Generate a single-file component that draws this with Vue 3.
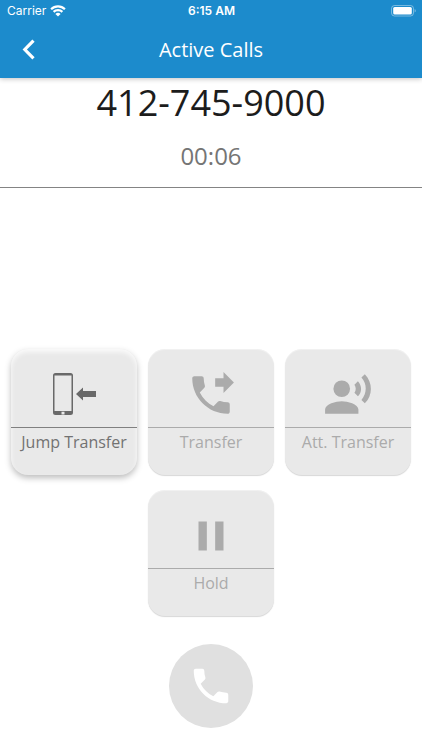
<script setup>
import { ref } from 'vue'

const phonePath =
  'M20 15.5c-1.25 0-2.45-.2-3.57-.57-.35-.11-.74-.03-1.02.24l-2.2 2.2c-2.83-1.44-5.15-3.75-6.59-6.59l2.2-2.21c.28-.26.36-.65.25-1C8.7 6.45 8.5 5.25 8.5 4c0-.55-.45-1-1-1H4c-.55 0-1 .45-1 1 0 9.39 7.61 17 17 17 .55 0 1-.45 1-1v-3.5c0-.55-.45-1-1-1z'

const number = ref('412-745-9000')
const duration = ref('00:06')

const actions = [
  { id: 'jump', label: 'Jump Transfer', enabled: true },
  { id: 'transfer', label: 'Transfer', enabled: false },
  { id: 'attended', label: 'Att. Transfer', enabled: false },
  { id: 'hold', label: 'Hold', enabled: false }
]
</script>

<template>
  <div class="screen">
    <header class="top">
      <div class="status">
        <div class="carrier">
          <span>Carrier</span>
          <svg class="wifi" viewBox="0 0 16 12" aria-hidden="true">
            <path d="M1.1 4.2a9.8 9.8 0 0 1 13.8 0" />
            <path d="M3.6 6.9a6.3 6.3 0 0 1 8.8 0" />
            <path class="dot" d="M8 11.6 5.4 9a3.7 3.7 0 0 1 5.2 0z" />
          </svg>
        </div>
        <span class="clock">6:15 AM</span>
        <svg class="battery" viewBox="0 0 26 12" aria-hidden="true">
          <rect class="shell" x="1.5" y=".5" width="22" height="10.5" rx="3" />
          <rect x="3.2" y="2" width="18.6" height="7.5" rx="1.5" />
          <path class="tip" d="M24.7 4c1.3.6 1.3 3 0 3.6z" />
        </svg>
      </div>
      <nav class="bar">
        <button class="back" type="button" aria-label="Back">
          <svg viewBox="0 0 14 22" aria-hidden="true"><path d="M11.5 1.6 2.8 10.5l8.7 8.9" /></svg>
        </button>
        <h1 class="title">Active Calls</h1>
      </nav>
    </header>

    <section class="call">
      <p class="number">{{ number }}</p>
      <p class="duration">{{ duration }}</p>
    </section>

    <main class="pad">
      <div class="grid">
        <button
          v-for="a in actions"
          :key="a.id"
          type="button"
          class="card"
          :class="[a.id, { raised: a.enabled }]"
          :disabled="!a.enabled"
        >
          <span class="picture">
            <svg v-if="a.id === 'jump'" viewBox="0 0 50 50" aria-hidden="true">
              <path
                fill-rule="evenodd"
                d="M6.5 3h15A2.5 2.5 0 0 1 24 5.5v37a2.5 2.5 0 0 1-2.5 2.5h-15A2.5 2.5 0 0 1 4 42.500v-37A2.5 2.5 0 0 1 6.500 3zM5.5 5.6v35.400h17V5.6zM12.500 41.8v2.600h3v-2.600z"
              />
              <path d="M27 24l7-6.5V21h13v6H34v3.500z" />
            </svg>
            <svg v-else-if="a.id === 'transfer'" viewBox="0 0 24 24" aria-hidden="true">
              <path d="M18 11l5-5-5-5v3h-4v4h4z" />
              <path :d="phonePath" />
            </svg>
            <svg v-else-if="a.id === 'attended'" viewBox="0 0 24 24" aria-hidden="true">
              <circle cx="9" cy="9" r="4" />
              <path
                d="M9 15c-2.67 0-8 1.34-8 4v2h16v-2c0-2.66-5.33-4-8-4zm7.76-9.64l-1.68 1.69c.84 1.18.84 2.71 0 3.89l1.68 1.69c2.02-2.02 2.02-5.07 0-7.27zM20.07 2l-1.63 1.63c2.77 3.02 2.77 7.56 0 10.74L20.07 16c3.9-3.89 3.91-9.95 0-14z"
              />
            </svg>
            <svg v-else viewBox="0 0 24 24" aria-hidden="true">
              <path d="M6 19h4V5H6v14zm8-14v14h4V5h-4z" />
            </svg>
          </span>
          <span class="label">{{ a.label }}</span>
        </button>
      </div>
      <button class="dial" type="button" aria-label="Call" disabled>
        <svg viewBox="0 0 24 24" aria-hidden="true"><path :d="phonePath" /></svg>
      </button>
    </main>
  </div>
</template>

<style>
body {
  margin: 0;
  background: #fff;
}
</style>

<style scoped>
.screen {
  display: flex;
  flex-direction: column;
  min-height: 100vh;
  background: #fff;
  font-family: 'Open Sans', 'Noto Sans', sans-serif;
}
button {
  margin: 0;
  padding: 0;
  border: 0;
  font: inherit;
}
svg {
  display: block;
  fill: currentColor;
}
.top {
  background: #1c8bcc;
  color: #fff;
  box-shadow: 0 1px 5px rgba(0, 0, 0, 0.24);
}
.status {
  display: grid;
  grid-template-columns: 1fr auto 1fr;
  align-items: center;
  height: 22px;
  padding: 0 6px 0 7px;
  font-family: Inter, Roboto, sans-serif;
  font-size: 12px;
  line-height: 22px;
}
.carrier {
  display: flex;
  align-items: center;
  gap: 4px;
}
.wifi {
  width: 16px;
  height: 12px;
}
.wifi path {
  fill: none;
  stroke: currentColor;
  stroke-width: 2.2;
}
.wifi .dot {
  fill: currentColor;
  stroke: none;
}
.clock {
  font-weight: 600;
}
.battery {
  justify-self: end;
  width: 26px;
  height: 12px;
}
.battery .shell {
  fill: none;
  stroke: #fff;
  stroke-opacity: 0.4;
}
.battery .tip {
  opacity: 0.5;
}
.bar {
  display: grid;
  grid-template-columns: 58px 1fr 58px;
  align-items: center;
  height: 56px;
}
.back {
  display: flex;
  align-items: center;
  justify-content: center;
  height: 56px;
  background: none;
  color: #fff;
  cursor: pointer;
}
.back svg {
  width: 14px;
  height: 22px;
}
.back path {
  fill: none;
  stroke: currentColor;
  stroke-width: 3.2;
}
.title {
  margin: 0;
  font-size: 20px;
  font-weight: 400;
  line-height: 28px;
  text-align: center;
}
.call {
  padding-bottom: 13px;
  border-bottom: 1px solid #848484;
  text-align: center;
}
.number,
.duration {
  margin: 0;
}
.number {
  color: #1c1c1c;
  font-size: 36px;
  line-height: 50px;
}
.duration {
  padding-top: 10px;
  color: #757575;
  font-size: 24px;
  line-height: 36px;
}
.pad {
  display: flex;
  flex-direction: column;
  align-items: center;
  gap: 28px;
  margin-top: auto;
  padding: 12px 11px 22px;
}
.grid {
  display: grid;
  grid-template-columns: repeat(3, 1fr);
  gap: 15px 11px;
  width: 100%;
}
.card {
  display: flex;
  flex-direction: column;
  aspect-ratio: 1;
  border-radius: 17px;
  background: #e9e9e9;
  color: #ababab;
  box-shadow: 0 1px 1px rgba(0, 0, 0, 0.16), inset 0 1px 1px rgba(255, 255, 255, 0.4);
}
.card.hold {
  grid-column: 2;
}
.card.raised {
  color: #696969;
  box-shadow: 0 3px 6px rgba(0, 0, 0, 0.26), inset 0 3px 5px rgba(255, 255, 255, 0.8);
  cursor: pointer;
}
.picture {
  display: flex;
  justify-content: center;
  width: 100%;
  padding: 21px 0 7px;
  border-bottom: 1px solid currentColor;
}
.raised .picture {
  border-bottom-color: #808080;
}
.picture svg {
  width: 50px;
  height: 50px;
}
.label {
  width: 100%;
  padding-top: 3px;
  font-size: 16px;
  line-height: 22px;
  text-align: center;
  white-space: nowrap;
}
.raised .label {
  color: #727272;
}
.dial {
  display: flex;
  align-items: center;
  justify-content: center;
  width: 84px;
  height: 84px;
  border-radius: 50%;
  background: #e0e0e0;
  color: #fff;
}
.dial svg {
  width: 46px;
  height: 46px;
}
</style>
